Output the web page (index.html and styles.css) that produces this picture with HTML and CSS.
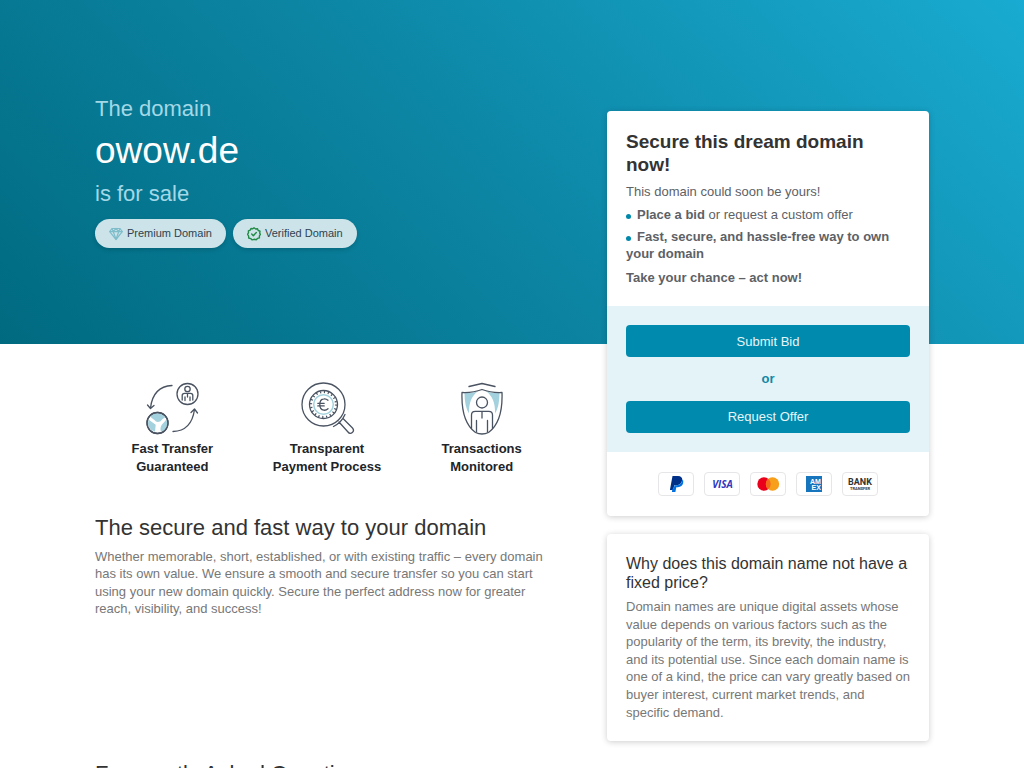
FILE: index.html
```html
<!DOCTYPE html>
<html lang="en">
<head>
<meta charset="utf-8">
<meta name="viewport" content="width=device-width, initial-scale=1">
<title>owow.de is for sale</title>
<link rel="stylesheet" href="styles.css">
</head>
<body>
<div class="page">
  <div class="hero-bg"></div>
  <header class="hero">
    <h1 class="hero-title">
      <span class="hero-line">The domain</span>
      <span class="hero-domain">owow.de</span>
      <span class="hero-line">is for sale</span>
    </h1>
    <div class="badges">
      <span class="badge">
        <svg class="badge-icon" viewBox="0 0 14 14" fill="none" stroke="#7fbdcb" stroke-width="1.200" stroke-linejoin="round"><path d="M3 1.5h8l2.3 3.2L7 12.5.7 4.700z"/><path d="M.7 4.700h12.600M4.300 4.700 7 12.300l2.700-7.600M3 1.500l1.300 3.200L7 1.500l2.700 3.200L11 1.500"/></svg>
        Premium Domain
      </span>
      <span class="badge">
        <svg class="badge-icon" viewBox="0 0 14 14" fill="none" stroke="#218a45" stroke-width="1.400" stroke-linejoin="round" stroke-linecap="round"><path d="M7 .8 8.600 2l1.900-.300.700 1.800 1.800.700L12.700 6.100 13.400 7.400l-1 1.500v2l-1.900.5L9.200 12.800 7 12.300 5.100 12.900 3.700 11.600l-2-.6L1.600 9 .6 7.300 1.500 5.700 1.400 3.800l1.800-.700L4 1.500 5.800 1.700z"/><path d="m4.700 7.100 1.600 1.600 3-3.100"/></svg>
        Verified Domain
      </span>
    </div>
  </header>

  <main class="content">
    <ul class="features">
      <li class="feature">
        <svg class="feature-icon" viewBox="0 0 56 56" fill="none" stroke="#4a5361" stroke-width="1.300" stroke-linecap="round" stroke-linejoin="round">
          <circle cx="43.500" cy="14" r="10.500"/><circle cx="43.500" cy="9" r="2.700"/>
          <path d="M38.200 20v-4.500q0-2.200 2.300-2.200h6q2.300 0 2.300 2.200V20M41 20.500v-3.500M46 20.500v-3.500M43.500 13.500v3.500"/>
          <circle cx="13.500" cy="43" r="10.500" fill="#fff"/>
          <g fill="#a3d1dd" stroke="none"><path d="M6 36.500q7.500-6.500 15.500.500-3.500 2-5 4.300-4 2-6-1.300-2-1.500-4.500-3.500z"/><path d="M4.500 39.500q4 3 7.200 5.200L11 51.800q-9-3-6.500-12.300z"/><path d="M22.500 39.500q3.200 8.500-5.500 12.500-1.500-4 1-7.500z"/></g>
          <circle cx="13.500" cy="43" r="10.500"/>
          <path d="M28 5.500Q9 6.500 6.500 28M3.500 25l3 3.500 3.500-3M29 51.500q18.500-.500 21.500-22M47 32.500l3.500-3.500 3 4"/>
        </svg>
        <span>Fast Transfer<br>Guaranteed</span>
      </li>
      <li class="feature">
        <svg class="feature-icon" viewBox="0 0 56 56" fill="none" stroke="#4a5361" stroke-width="1.300" stroke-linecap="round" stroke-linejoin="round">
          <circle cx="24.500" cy="24.500" r="21.500"/><circle cx="24.500" cy="24.500" r="14"/>
          <circle cx="24.500" cy="24.500" r="12.500" stroke-width="2.200" stroke-dasharray="1.200 2.727" stroke-linecap="butt"/>
          <circle cx="24.500" cy="24.500" r="9.800" stroke="#a3d1dd" stroke-width="1.500"/>
          <path d="M29 20.200q-2-1.700-4.200-1.300-4 .5-4 5.600t4 5.700q2.300.300 4.200-1.400M18.800 23.300h6.400M18.800 25.900h6.400" stroke-width="1.300"/>
          <path d="M34.500 46.500q8-4 11.500-12M40 42l9 10q2 2.500 4.300.500t.200-4.500l-9.500-9.500"/>
        </svg>
        <span>Transparent<br>Payment Process</span>
      </li>
      <li class="feature">
        <svg class="feature-icon" viewBox="0 0 56 56" fill="none" stroke="#4a5361" stroke-width="1.300" stroke-linecap="round" stroke-linejoin="round">
          <path d="M10.500 13q9 .500 14.500-2.500Q14.500 17 15 33.500q-4.500-7-4.500-20.500zM45.500 13q-9 .500-14.500-2.500Q41.500 17 41 33.500q4.500-7 4.500-20.500z" fill="#a3d1dd" stroke="none"/>
          <path d="M28 9.500Q19 13 8 12.500 7 42 21.500 52.500q6.500 3 13 0Q49 42 48 12.500 37 13 28 9.500zM15 6.500 28 3.500l13 3"/>
          <circle cx="28" cy="22.500" r="5.500"/>
          <path d="M17.500 48.500V35q0-3.700 3.700-3.700h13.600q3.700 0 3.700 3.700v13.500M22.500 52V40.500M33.500 52V40.500M28 31.500V38"/>
        </svg>
        <span>Transactions<br>Monitored</span>
      </li>
    </ul>
    <section>
      <h2 class="section-title">The secure and fast way to your domain</h2>
      <p class="text">Whether memorable, short, established, or with existing traffic – every domain has its own value. We ensure a smooth and secure transfer so you can start using your new domain quickly. Secure the perfect address now for greater reach, visibility, and success!</p>
    </section>
    <section class="faq">
      <h2 class="section-title">Frequently Asked Questions</h2>
    </section>
  </main>

  <aside class="sidebar">
    <section class="card">
      <div class="card-body offer">
        <h2 class="offer-title">Secure this dream domain now!</h2>
        <p>This domain could soon be yours!</p>
        <ul class="offer-list">
          <li><strong>Place a bid</strong> or request a custom offer</li>
          <li><strong>Fast, secure, and hassle-free way to own your domain</strong></li>
        </ul>
        <p><strong>Take your chance – act now!</strong></p>
      </div>
      <div class="actions">
        <button class="button" type="button">Submit Bid</button>
        <span class="or">or</span>
        <button class="button" type="button">Request Offer</button>
      </div>
      <div class="payments">
        <svg class="pay" viewBox="0 0 34 22" role="img" aria-label="PayPal"><path d="M13.500 3h5.500q4.500.300 4.200 4-.7 5-5.700 5.200h-2.300L14.300 17H10.900z" fill="#003087"/><path d="M23.500 6.200q1.200 1.300.7 3.800-1 4-5.300 4.200h-1.600l-.9 4.900h-3.500l.500-3.400h1.200l.9-3.500h2.300q4.900-.400 5.700-6z" fill="#0070e0"/></svg>
        <svg class="pay" viewBox="0 0 34 22" role="img" aria-label="Visa"><text x="17.500" y="15" text-anchor="middle" class="visa">VISA</text></svg>
        <svg class="pay" viewBox="0 0 34 22" role="img" aria-label="Mastercard"><circle cx="13" cy="11" r="6.700" fill="#eb001b"/><circle cx="21.500" cy="11" r="6.700" fill="#f79e1b"/><path d="M17.250 5.800a6.700 6.700 0 0 1 0 10.400 6.700 6.700 0 0 1 0-10.400z" fill="#f26a1b"/></svg>
        <svg class="pay" viewBox="0 0 34 22" role="img" aria-label="American Express"><path d="M9 3h16v16H9z" fill="#1675bd"/><text x="13" y="10.500" class="amex">AM</text><text x="14.500" y="17" class="amex">EX</text></svg>
        <svg class="pay" viewBox="0 0 34 22" role="img" aria-label="Bank transfer"><text x="17" y="12" text-anchor="middle" class="bank">BANK</text><text x="17" y="17" text-anchor="middle" class="transfer">TRANSFER</text></svg>
      </div>
    </section>
    <section class="card">
      <div class="card-body">
        <h3 class="card-title">Why does this domain name not have a fixed price?</h3>
        <p class="text">Domain names are unique digital assets whose value depends on various factors such as the popularity of the term, its brevity, the industry, and its potential use. Since each domain name is one of a kind, the price can vary greatly based on buyer interest, current market trends, and specific demand.</p>
      </div>
    </section>
  </aside>
</div>
</body>
</html>
```
FILE: styles.css
```css
* { box-sizing: border-box; }
html { scrollbar-width: none; }
body {
  margin: 0;
  background: #fff;
  color: #333;
  font: 13px/1.35 "Liberation Sans", Arial, sans-serif;
}
h1, h2, h3, p, ul { margin: 0; padding: 0; font-weight: 400; }
ul { list-style: none; }

.page {
  display: grid;
  grid-template-columns: 1fr minmax(0, 464px) minmax(0, 322px) 1fr;
  grid-template-rows: auto 1fr;
  column-gap: 48px;
}
.hero-bg {
  grid-column: 1 / -1;
  grid-row: 1;
  background: linear-gradient(45deg, #006a80, #0d87a6 50%, #19abd1);
}
.hero { grid-column: 2; grid-row: 1; padding: 96px 0; }
.content { grid-column: 2; grid-row: 2; padding: 36px 0 48px; }
.sidebar {
  grid-column: 3;
  grid-row: 1 / 3;
  display: flex;
  flex-direction: column;
  gap: 18px;
  padding: 111px 0 28px;
}

.hero-title { display: flex; flex-direction: column; gap: 7px; line-height: 1.2; }
.hero-line { font-size: 22px; color: #a3d8e6; }
.hero-domain { font-size: 37px; color: #fff; }
.badges { display: flex; flex-wrap: wrap; gap: 7px; margin-top: 12px; }
.badge {
  display: flex;
  align-items: center;
  gap: 4px;
  height: 29px;
  padding: 0 14px;
  border-radius: 15px;
  background: #cce4e9;
  color: #2c4250;
  font-size: 11px;
  box-shadow: 0 2px 4px rgba(0, 0, 0, .15);
}
.badge-icon { width: 14px; height: 14px; }

.features { display: grid; grid-template-columns: repeat(3, 1fr); margin-bottom: 40px; }
.feature {
  display: flex;
  flex-direction: column;
  align-items: center;
  gap: 4px;
  text-align: center;
  font-weight: 700;
  color: #212529;
}
.feature-icon { width: 56px; height: 56px; }
.section-title { margin-bottom: 6px; font-size: 22px; line-height: 1.2; }
.text { color: #777; }
.faq { margin-top: 143px; }

.card {
  overflow: hidden;
  border-radius: 4px;
  background: #fff;
  box-shadow: 0 1px 6px rgba(0, 0, 0, .2);
}
.card-body { padding: 20px 19px; }
.offer { color: #5d6166; }
.offer-title { margin-bottom: 6px; color: #333; font-size: 19px; font-weight: 700; line-height: 1.2; }
.offer-list { display: flex; flex-direction: column; gap: 4px; margin: 6px 0; }
.offer-list li::before {
  content: "";
  display: inline-block;
  width: 5px;
  height: 5px;
  margin-right: 6px;
  border-radius: 50%;
  background: #0088aa;
}
.actions {
  display: flex;
  flex-direction: column;
  gap: 13px;
  padding: 19px;
  background: #e3f3f7;
  text-align: center;
}
.button {
  height: 32px;
  border: 0;
  border-radius: 4px;
  background: #008aad;
  color: #e6f5f9;
  font: inherit;
  cursor: pointer;
}
.or { color: #1288a7; font-weight: 700; }
.payments { display: flex; flex-wrap: wrap; justify-content: center; gap: 10px; padding: 20px 19px; }
.pay {
  width: 36px;
  height: 24px;
  border: 1px solid #e6e6e8;
  border-radius: 4px;
}
.visa { font: italic 700 10px "Open Sans", sans-serif; fill: #3036c0; }
.amex { font: 700 7px "Liberation Sans", sans-serif; fill: #fff; }
.bank { font: 700 9px Roboto, sans-serif; fill: #333; }
.transfer { font: 700 4px Roboto, sans-serif; fill: #333; }
.card-title { margin-bottom: 6px; font-size: 16px; line-height: 1.2; }
```
